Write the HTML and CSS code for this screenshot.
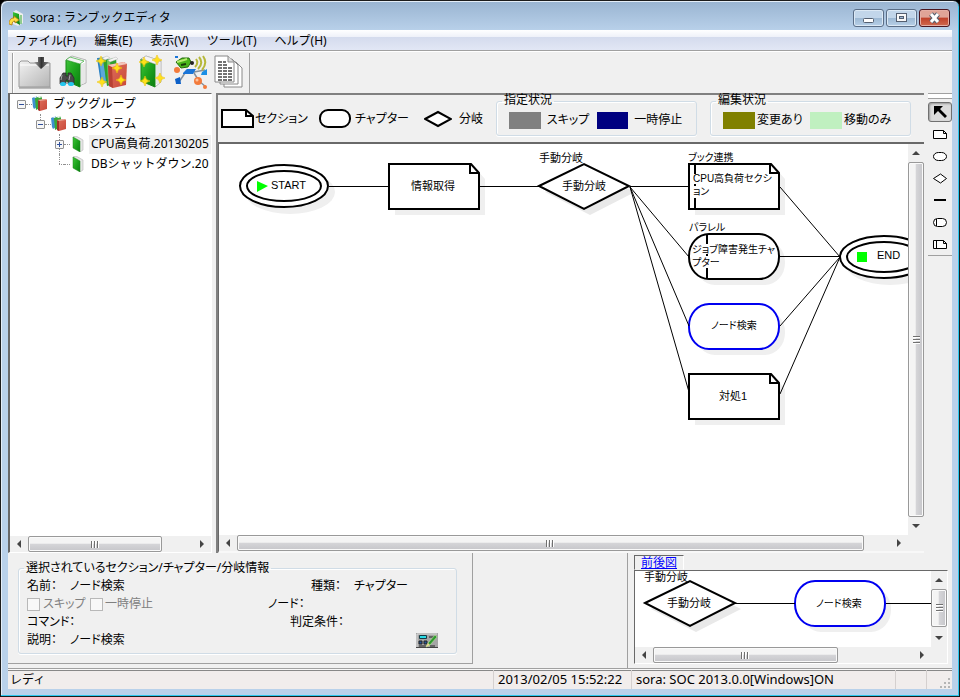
FILE: index.html
```html
<!DOCTYPE html>
<html lang="ja">
<head>
<meta charset="utf-8">
<title>sora : ランブックエディタ</title>
<link rel="stylesheet" href="styles.css">
</head>
<body>
<svg class="defs" aria-hidden="true">
  <defs>
    <linearGradient id="g-green" x1="0" y1="0" x2="1" y2="1"><stop offset="0" stop-color="#3fc43a"/><stop offset=".5" stop-color="#1da31d"/><stop offset="1" stop-color="#0c7d12"/></linearGradient>
    <linearGradient id="g-red" x1="0" y1="0" x2="1" y2="1"><stop offset="0" stop-color="#e0705c"/><stop offset="1" stop-color="#c8483a"/></linearGradient>
    <linearGradient id="g-folder" x1="0" y1="0" x2="1" y2="1"><stop offset="0" stop-color="#f2f2f2"/><stop offset="1" stop-color="#b4b4b4"/></linearGradient>
    <linearGradient id="g-arrow" x1="0" y1="0" x2="1" y2="0"><stop offset="0" stop-color="#aaa"/><stop offset=".5" stop-color="#333"/><stop offset="1" stop-color="#888"/></linearGradient>
    <path id="spark" d="M0-5Q.6-.6 5 0Q.6 .6 0 5Q-.6 .6-5 0Q-.6-.6 0-5Z" fill="#ffe01a" stroke="#f0c400" stroke-width=".6"/>

    <g id="section">
      <path d="M6 51V6H88L96 15V51Z" fill="#efefef"/>
      <path d="M0 0H82L90 9V45H0Z" fill="#fff" stroke="currentColor" stroke-width="2"/>
      <path d="M81 0V9H90" fill="none" stroke="currentColor" stroke-width="2"/>
    </g>
    <g id="chapter">
      <rect x="6" y="6" width="90" height="45" rx="20" ry="22" fill="#efefef"/>
      <rect width="90" height="45" rx="20" ry="22" fill="#fff" stroke="currentColor" stroke-width="2"/>
    </g>
    <g id="branch">
      <path d="M6 28L51 6L96 28L51 51Z" fill="#e9e9e9"/>
      <path d="M0 22L45 0L90 22L45 45Z" fill="#fff" stroke="currentColor" stroke-width="2"/>
    </g>
    <g id="terminal">
      <ellipse cx="51" cy="28" rx="45" ry="22" fill="#efefef"/>
      <ellipse cx="45" cy="22" rx="44" ry="21" fill="#fff" stroke="currentColor" stroke-width="2"/>
      <ellipse cx="45" cy="22" rx="37" ry="15" fill="#fff" stroke="currentColor" stroke-width="2"/>
    </g>
    <g id="books">
      <path d="M0 2L5 0V11L2 13L1 11Z" fill="#3f8fd0"/>
      <path d="M3 2L9 0L10 2V11L4 14Z" fill="#3aa83a"/>
      <path d="M2 1L4 0L5 1L3 2ZM6 1L8 0L10 1L7 2Z" fill="#fff"/>
      <path d="M6 4L14 3L15 4V13L8 15L6 14Z" fill="url(#g-red)"/>
      <path d="M6 4L8 5V15L6 14Z" fill="#a03028"/>
      <path d="M6 4L13 3L15 4L8 5Z" fill="#e8a898"/>
    </g>
    <g id="book">
      <path d="M1 1L4 0L11 4V14L8 16Z" fill="#e6e6e6" stroke="#aaa" stroke-width=".5"/>
      <path d="M1 1L8 5V16L1 12Z" fill="url(#g-green)" stroke="#188a18" stroke-width=".5"/>
    </g>
  </defs>
</svg>

<div class="window">
  <header class="titlebar">
    <svg class="app-icon" width="16" height="16" viewBox="0 0 16 16"><path d="M4 2L7 0L14 4V13L9 16L4 14Z" fill="#eee"/><path d="M4 2L10 4L11 15L4 11Z" fill="url(#g-green)"/><path d="M12 5V14" stroke="#3a3" stroke-width="1"/><path d="M0 14C0 10 2 8 5 8L5 6L10 10L6 13L6 11C4 11 3 12 3 15Z" fill="#ffdf45" stroke="#b87a10" stroke-width=".8"/></svg>
    <h1 class="title">sora : ランブックエディタ</h1>
    <div class="window-buttons">
      <button class="wbtn" type="button" aria-label="最小化"><svg width="29" height="16"><rect x="9.5" y="8.500" width="10" height="4" rx="1" fill="#fff" stroke="#545f70"/></svg></button>
      <button class="wbtn" type="button" aria-label="最大化"><svg width="29" height="16"><rect x="9.5" y="3.500" width="10" height="8" fill="#f8f8f8" stroke="#545f70"/><rect x="12.500" y="6.500" width="4" height="2" fill="#9db8d4" stroke="#545f70"/></svg></button>
      <button class="wbtn wbtn-close" type="button" aria-label="閉じる"><svg width="29" height="16"><path d="M11 4L18 12M18 4L11 12" stroke="#56606e" stroke-width="5"/><path d="M11 4L18 12M18 4L11 12" stroke="#fff" stroke-width="3"/></svg></button>
    </div>
  </header>

  <nav class="menubar">
    <button type="button">ファイル(F)</button>
    <button type="button">編集(E)</button>
    <button type="button">表示(V)</button>
    <button type="button">ツール(T)</button>
    <button type="button">ヘルプ(H)</button>
  </nav>

  <div class="toolbar">
    <div class="tools">
      <button type="button" aria-label="開く"><svg width="34" height="34" viewBox="0 0 34 34"><path d="M1 8L3 6H10L12 8H32V32H1Z" fill="url(#g-folder)" stroke="#999"/><path d="M2 10H31" stroke="#fff"/><path d="M20 2H26V7H31L23 14L16 7H20Z" fill="url(#g-arrow)"/><path d="M1 33H33" stroke="#888"/></svg></button>
      <button type="button" aria-label="ブック検索"><svg width="34" height="34" viewBox="0 0 34 34"><path d="M10 4L15 1L29 5V28L22 31Z" fill="#fff" stroke="#999" stroke-width=".7"/><path d="M25 9V29M27 8V28" stroke="#bbb" stroke-width=".7"/><path d="M9 5L23 9V32L9 26Z" fill="url(#g-green)" stroke="#178817"/><path d="M9 5L13 2L27 6L23 9Z" fill="#f4f4f4" stroke="#3a3" stroke-width=".7"/><path d="M3 23L6 18H9V21H11V18H14L17 23V29H11V25H9V29H3Z" fill="#4a4a4a" stroke="#222" stroke-width=".7"/><path d="M5 20L4 25M13 20L12 25" stroke="#aaa"/><ellipse cx="6" cy="29" rx="3" ry="2" fill="#25c7ee"/><ellipse cx="14" cy="29" rx="3" ry="2" fill="#25c7ee"/></svg></button>
      <button type="button" aria-label="ブックグループ作成"><svg width="34" height="34" viewBox="0 0 34 34"><path d="M1 3L12 2L14 27L5 29Z" fill="#2b82c4"/><path d="M3 4L8 3L10 28L6 28Z" fill="#5da8da"/><path d="M7 5L20 3L22 28L11 31Z" fill="#2ea02e"/><path d="M11 5L14 4L15 28L12 29Z" fill="#72c960"/><path d="M6 3L11 1L14 3L9 5ZM12 5L20 2L22 4L14 7Z" fill="#f5f5f5" stroke="#aaa" stroke-width=".4"/><path d="M12 10L28 7L31 9L30 30L17 33L13 31Z" fill="url(#g-red)"/><path d="M12 10L16 12L17 33L13 31Z" fill="#b84034"/><path d="M12 10L28 7L31 9L16 12Z" fill="#f2c6bc"/><use href="#spark" x="5" y="6"/><use href="#spark" x="21" y="13"/><use href="#spark" x="25" y="25"/><use href="#spark" x="6" y="27"/></svg></button>
      <button type="button" aria-label="ブック作成"><svg width="34" height="34" viewBox="0 0 34 34"><path d="M6 4L11 1L26 6V27L20 32Z" fill="#fff" stroke="#999" stroke-width=".7"/><path d="M22 9V29M24 8V28" stroke="#bbb" stroke-width=".7"/><path d="M6 4L20 9V32L6 26Z" fill="url(#g-green)" stroke="#178817"/><path d="M6 4L11 1L26 6L20 9Z" fill="#f4f4f4" stroke="#aaa" stroke-width=".5"/><use href="#spark" x="9" y="7"/><use href="#spark" x="22" y="5"/><use href="#spark" x="25" y="23"/><use href="#spark" x="10" y="26"/></svg></button>
      <button type="button" aria-label="ノード自動取得"><svg width="34" height="34" viewBox="0 0 34 34"><path d="M5 27L13 15M20 18L25 26M20 17L31 15M25 26L32 32" stroke="#87909a" stroke-width="1.500"/><path d="M9 18L13 14H22L19 19H9Z" fill="#1a75d8"/><path d="M1 24L6 22L7 29L2 29Z" fill="#0c60c8"/><path d="M28 17L33 14V20H27Z" fill="#1a8fe6"/><circle cx="3" cy="15" r="3" fill="#f37b3c"/><circle cx="24" cy="26" r="4" fill="#f37b3c"/><circle cx="23" cy="25" r="1.500" fill="#ffc49c"/><circle cx="31" cy="32" r="2" fill="#f37b3c"/><path d="M2 7L8 3L15 3L17 7L14 12L7 13Z" fill="#48b51a" stroke="#246d0c"/><path d="M3 7L10 5L13 4" stroke="#b6ec70" stroke-width="2" fill="none"/><path d="M7 10L12 9" stroke="#183d08" stroke-width="2"/><circle cx="18" cy="8" r="2" fill="#222"/><path d="M22 4Q25 8 21 12M25 2Q30 8 24 14M29 1Q34 8 28 15" fill="none" stroke="#b6b83a" stroke-width="2"/><path d="M1 2H4" stroke="#1a75d8" stroke-width="2"/></svg></button>
      <button type="button" aria-label="レポート"><svg width="34" height="34" viewBox="0 0 34 34"><path d="M11 7H23L29 13V32H11Z" fill="#fff" stroke="#888"/><path d="M7 4H19L25 10V29H7Z" fill="#fff" stroke="#888"/><path d="M2 1H15L21 7V27H2Z" fill="#fff" stroke="#888"/><path d="M15 1V7H21" fill="#ddd" stroke="#888"/><path d="M5 7H13M5 10H14M5 13H19M5 16H19M5 19H19M5 22H19M5 25H19" stroke="#444" stroke-width="1.500" stroke-dasharray="4 1"/></svg></button>
    </div>
  </div>

  <main class="workspace">
    <section class="tree-panel">
      <ul class="tree">
        <li>
          <div class="tree-row"><span class="box minus"></span><span class="dots"></span><svg width="16" height="16"><use href="#books"/></svg><span class="tree-text">ブックグループ</span></div>
          <ul>
            <li class="last">
              <div class="tree-row"><span class="box minus"></span><span class="dots"></span><svg width="16" height="16"><use href="#books"/></svg><span class="tree-text">DBシステム</span></div>
              <ul>
                <li>
                  <div class="tree-row"><span class="box plus"></span><span class="dots"></span><svg class="leaf" width="16" height="16"><use href="#book" x="2"/></svg><span class="tree-text selected">CPU高負荷.20130205</span></div>
                </li>
                <li class="last">
                  <div class="tree-row"><span class="elbow"></span><span class="dots"></span><svg class="leaf" width="16" height="16"><use href="#book" x="2"/></svg><span class="tree-text">DBシャットダウン.20</span></div>
                </li>
              </ul>
            </li>
          </ul>
        </li>
      </ul>
      <div class="hscroll">
        <button type="button" class="arrow left" aria-label="左へ"></button>
        <div class="track"><div class="thumb tree-thumb"></div></div>
        <button type="button" class="arrow right" aria-label="右へ"></button>
      </div>
    </section>

    <section class="editor">
      <div class="legend-bar">
        <span class="legend-item"><svg width="33" height="20"><path d="M1 1H25L32 7V18H1Z" fill="#fff" stroke="#000" stroke-width="2"/><path d="M25 1V7H32" fill="none" stroke="#000" stroke-width="2"/></svg>セクション</span>
        <span class="legend-item wide-gap"><svg width="32" height="20"><rect x="1" y="1" width="30" height="17" rx="8" fill="#fff" stroke="#000" stroke-width="2"/></svg>チャプター</span>
        <span class="legend-item branch-item"><svg width="28" height="20"><path d="M1 10L14 3L27 10L14 17Z" fill="#fff" stroke="#000" stroke-width="2"/></svg>分岐</span>
        <fieldset class="status-group">
          <legend>指定状況</legend>
          <span class="swatch gray"></span><span class="swatch-label">スキップ</span>
          <span class="swatch navy"></span><span class="swatch-label">一時停止</span>
        </fieldset>
        <fieldset class="status-group">
          <legend>編集状況</legend>
          <span class="swatch olive"></span><span class="swatch-label tight">変更あり</span>
          <span class="swatch mint"></span><span class="swatch-label tight">移動のみ</span>
        </fieldset>
      </div>
      <div class="canvas-frame">
        <svg class="canvas" role="img" aria-label="ランブックフロー図">
          <use href="#terminal" x="20" y="20"/>
          <use href="#section" x="170" y="20"/>
          <use href="#branch" x="320" y="20"/>
          <use href="#section" x="470" y="20"/>
          <use href="#chapter" x="470" y="90"/>
          <use href="#chapter" class="active" x="470" y="160"/>
          <use href="#section" x="470" y="230"/>
          <use href="#terminal" x="620" y="91"/>
          <g class="links">
            <path class="straight" d="M110 42.500H170M260 42.500H320M411 42.500H470M560 112.500H621"/>
            <path d="M411 43L470 113M411 43L470 182M411 43L470 248M561 43L621 113M561 182L621 113M561 250L621 113"/>
          </g>
          <path class="bar" d="M476 20V30M476 40V42M476 54V65M488 90V100M488 110V112M488 124V135"/>
          <path d="M38 37L49 42L38 48Z" fill="#0f0"/>
          <rect x="638" y="108" width="10" height="10" fill="#0f0"/>
          <text x="52" y="45">START</text>
          <text x="192" y="46">情報取得</text>
          <text x="320" y="18">手動分岐</text>
          <text x="343" y="46">手動分岐</text>
          <text class="kana" x="469" y="17">ブック連携</text>
          <text class="kana" x="474" y="38">CPU高負荷セクシ</text>
          <text class="kana" x="474" y="51">ョン</text>
          <text class="kana" x="470" y="87">パラレル</text>
          <text class="kana" x="473" y="109">ジョブ障害発生チャ</text>
          <text class="kana" x="473" y="122">プター</text>
          <text class="kana" x="492" y="185">ノード検索</text>
          <text x="500" y="256">対処1</text>
          <text x="658" y="115">END</text>
        </svg>
        <div class="vscroll">
          <button type="button" class="arrow up" aria-label="上へ"></button>
          <div class="track"><div class="thumb canvas-vthumb"></div></div>
          <button type="button" class="arrow down" aria-label="下へ"></button>
        </div>
        <div class="hscroll">
          <button type="button" class="arrow left" aria-label="左へ"></button>
          <div class="track"><div class="thumb canvas-hthumb"></div></div>
          <button type="button" class="arrow right" aria-label="右へ"></button>
        </div>
      </div>
    </section>

    <aside class="palette">
      <div class="palette-head"></div>
      <button type="button" class="pressed" aria-label="選択"><svg width="16" height="16"><path d="M2 2H11L8 5L15 12L13 14L6 7L2 11Z"/></svg></button>
      <button type="button" aria-label="セクション"><svg width="16" height="16"><path class="o" d="M1.500 4.500H11.500L14.500 7.500V12.500H1.500ZM11.500 4.500V7.500H14.500"/></svg></button>
      <button type="button" aria-label="チャプター"><svg width="16" height="16"><rect class="o" x="1.500" y="4.500" width="13" height="8" rx="5" ry="4"/></svg></button>
      <button type="button" aria-label="分岐"><svg width="16" height="16"><path class="o" d="M1.500 8.500L8.500 4L14.500 8.500L8.500 13Z"/></svg></button>
      <button type="button" aria-label="線"><svg width="16" height="16"><rect x="2" y="7" width="12" height="2"/></svg></button>
      <button type="button" aria-label="パラレル"><svg width="16" height="16"><rect class="o" x="1.500" y="4.500" width="13" height="8" rx="4"/><path class="o" d="M4.500 5V12"/></svg></button>
      <button type="button" aria-label="ブック連携"><svg width="16" height="16"><path class="o" d="M1.500 4.500H11.500L14.500 7.500V12.500H1.500ZM11.500 4.500V7.500H14.500M4.500 4.500V12.500"/></svg></button>
      <div class="palette-end"></div>
    </aside>
  </main>

  <section class="lower">
    <div class="info-panel">
      <fieldset class="info">
        <legend>選択されているセクション/チャプター/分岐情報</legend>
        <div class="info-row">
          <span class="key">名前：</span><span class="val">ノード検索</span>
          <span class="key key-kind">種類：</span><span>チャプター</span>
        </div>
        <div class="info-row">
          <label class="check"><input type="checkbox" disabled>スキップ</label>
          <label class="check"><input type="checkbox" disabled>一時停止</label>
          <span class="key-node">ノード：</span>
        </div>
        <div class="info-row">
          <span>コマンド：</span>
          <span class="key-cond">判定条件：</span>
        </div>
        <div class="info-row">
          <span class="key">説明：</span><span class="val">ノード検索</span>
          <button type="button" class="edit" aria-label="編集"><svg width="22" height="15"><rect width="22" height="15" fill="#a5a5a5"/><path d="M1 14V1H21" fill="none" stroke="#ddd"/><path d="M0 14.500H22" stroke="#444"/><rect x="3" y="2" width="8" height="4" rx="1" fill="#153b44"/><path d="M4 4H10" stroke="#29dbe6" stroke-width="2"/><path d="M13 4H20M3 13H10M14 13H19" stroke="#222"/><path d="M3 8H6V11H3ZM8 8H11V11H8Z" fill="#26569c" stroke="#222"/><path d="M10 14L12 10L19 2L21 4L14 12Z" fill="#2f9a2f" stroke="#bfe6a0" stroke-width=".6"/><path d="M10 14L12 10L14 12Z" fill="#f0d590"/></svg></button>
        </div>
      </fieldset>
    </div>
    <div class="preview-panel">
      <a class="tab" href="#preview">前後図</a>
      <div class="preview-frame" id="preview">
        <svg class="canvas" role="img" aria-label="前後図">
          <use href="#branch" x="10" y="10"/>
          <use href="#chapter" class="active" x="160" y="10"/>
          <g class="links"><path class="straight" d="M99 32.500H160M251 32.500H400"/></g>
          <text x="9" y="10">手動分岐</text>
          <text x="32" y="36">手動分岐</text>
          <text class="kana" x="181" y="36">ノード検索</text>
        </svg>
        <div class="vscroll">
          <button type="button" class="arrow up" aria-label="上へ"></button>
          <div class="track"><div class="thumb preview-vthumb"></div></div>
          <button type="button" class="arrow down" aria-label="下へ"></button>
        </div>
        <div class="hscroll">
          <button type="button" class="arrow left" aria-label="左へ"></button>
          <div class="track"><div class="thumb preview-hthumb"></div></div>
          <button type="button" class="arrow right" aria-label="右へ"></button>
        </div>
      </div>
    </div>
  </section>

  <footer class="statusbar">
    <span class="ready">レディ</span>
    <span class="cell clock">2013/02/05 15:52:22</span>
    <span class="cell host">sora: SOC 2013.0.0[Windows]ON</span>
    <span class="cell blank"></span>
    <span class="cell grip"><svg width="12" height="12" fill="#b5b5b5"><path d="M9 1h2v2h-2zM5 5h2v2h-2zM9 5h2v2h-2zM1 9h2v2h-2zM5 9h2v2h-2zM9 9h2v2h-2z"/></svg></span>
  </footer>
</div>
</body>
</html>
```

FILE: styles.css
```css
* { box-sizing: border-box; }

body {
  margin: 0;
  background: #000;
  color: #000;
  font: 12px/16px "Noto Sans", "Noto Sans CJK JP", sans-serif;
}

button, input { font: inherit; color: inherit; }
button { padding: 0; border: 0; background: none; }
ul { list-style: none; margin: 0; padding: 0; }
svg { display: block; flex: none; }
fieldset { margin: 0; padding: 0; min-width: 0; border: 1px solid #d0dce6; border-radius: 3px; box-shadow: inset 1px 1px #fff, 0 1px #fff; }
legend { padding: 0 2px; }
.defs { position: absolute; width: 0; height: 0; }

.window {
  display: flex;
  flex-direction: column;
  height: 100vh;
  min-height: 600px;
  padding: 0 7px 7px;
  border: 1px solid #1c1c1c;
  border-radius: 7px 7px 0 0;
  background: linear-gradient(#99b4d1, #b9d1ea 30px);
  box-shadow: inset -1px -1px #2cc8ee, inset 1px 1px #e4eef8;
  overflow: hidden;
}

/* title and menus */
.titlebar { display: flex; align-items: center; height: 29px; padding: 5px 2px 0 1px; gap: 5px; }
.title { flex: 1; margin: 0; font-size: 12px; font-weight: 400; }
.window-buttons { display: flex; gap: 2px; }
.wbtn {
  width: 31px;
  height: 18px;
  border: 1px solid #5a6d86;
  border-radius: 3px;
  background: linear-gradient(#c2d6ea 50%, #9cb8d3 50%, #b8d0e8);
  box-shadow: inset 0 0 0 1px #dce9f5;
}
.wbtn-close { border-color: #4b1620; background: linear-gradient(#e0a497 45%, #c0412a 50%, #cf6a50); box-shadow: inset 0 0 0 1px #e5aea4; }

.menubar {
  display: flex;
  gap: 18px;
  height: 21px;
  padding: 1px 7px 0;
  border-bottom: 1px solid #a0a0a0;
  background: linear-gradient(#fff, #eef1f9 7px, #d4dbed 7px, #e2e7f5);
}

.toolbar { display: flex; height: 42px; padding-top: 2px; background: #f0f0f0; box-shadow: inset 0 1px #fff; }
.tools { display: flex; align-items: flex-start; gap: 5px; margin-left: 4px; padding: 2px 2px 0 5px; border: solid #a0a0a0; border-width: 0 1px; box-shadow: inset 1px 0 #fff; }

/* work area */
.workspace {
  display: grid;
  grid-template-columns: 204px minmax(0, 1fr) 24px;
  flex: 1;
  min-height: 0;
  background: #f0f0f0;
}
.tree-panel {
  display: flex;
  flex-direction: column;
  border: solid;
  border-width: 1px 1px 1px 2px;
  border-color: #696969 #fff #fff #696969;
  background: #fff;
  overflow: hidden;
}
.tree { flex: 1; padding-left: 7px; overflow: hidden; }
.tree li { position: relative; }
.tree ul { padding-left: 19px; }
.tree ul li::before { content: ""; position: absolute; left: 4px; top: 0; height: 100%; border-left: 1px dotted #909090; }
.tree li.last::before { height: 10px; }
.tree-row { position: relative; display: flex; align-items: center; height: 20px; white-space: nowrap; }
.tree-row > * { flex: none; }
.tree-text { height: 19px; padding: 1px 2px 0; margin-left: 3px; }
.tree-text.selected { background: #f0f0f0; }
.box { width: 9px; height: 9px; border: 1px solid #919191; border-radius: 1px; background: linear-gradient(#2f4f9c, #2f4f9c) center / 5px 1px no-repeat, #f6f6f6; }
.box.plus { background: linear-gradient(#2f4f9c, #2f4f9c) center / 5px 1px no-repeat, linear-gradient(#2f4f9c, #2f4f9c) center / 1px 5px no-repeat, #f6f6f6; }
.dots { width: 6px; border-top: 1px dotted #909090; }
.elbow { width: 5px; margin-left: 4px; border-top: 1px dotted #909090; }

.editor { display: flex; flex-direction: column; min-width: 0; margin: 0 4px; border: solid; border-width: 2px 0 0 2px; border-color: #808080; }
.legend-bar {
  display: grid;
  grid-template-columns: 98px 105px 72px 201px 201px;
  height: 47px;
  padding-left: 3px;
}
.legend-item { display: flex; align-items: center; gap: 1px; font-feature-settings: "palt"; white-space: nowrap; }
.wide-gap { gap: 4px; }
.branch-item { gap: 7px; }
.status-group { display: flex; align-items: flex-start; height: 41px; padding: 0 12px; font-feature-settings: "palt"; }
.status-group + .status-group { margin-left: 13px; margin-right: -13px; }
.status-group legend { height: 12px; margin-left: -7px; line-height: 10px; }
.swatch { width: 32px; height: 17px; margin-top: 5px; }
.swatch-label { width: 56px; height: 17px; margin-top: 5px; padding-left: 6px; white-space: nowrap; }
.swatch-label.tight { width: 55px; padding-left: 2px; }
.gray { background: #808080; }
.navy { background: #000080; }
.olive { background: #808000; }
.mint { background: #c0f0c0; }

.canvas-frame {
  display: grid;
  grid-template-columns: minmax(0, 1fr) 16px;
  grid-template-rows: minmax(0, 1fr) 16px;
  flex: 1;
  min-height: 0;
  border: solid #696969;
  border-width: 2px 0 0 1px;
  border-bottom: 2px solid #f8f8f8;
}
.canvas { width: 100%; height: 100%; background: #fff; color: #000; font: 11px "Liberation Sans", "Noto Sans CJK JP", sans-serif; font-feature-settings: "palt"; overflow: hidden; }
.kana { font-size: 10px; }
.links { stroke: #000; stroke-width: 1; fill: none; }
.straight { shape-rendering: crispEdges; }
.bar { stroke: #000; stroke-width: 2; }
.active { color: #0000f0; }

/* scroll bars */
.hscroll, .vscroll { display: flex; background: #f0f0f0; }
.hscroll { height: 16px; }
.vscroll { flex-direction: column; width: 16px; }
.track { display: flex; flex: 1; min-width: 0; min-height: 0; }
.vscroll .track { flex-direction: column; }
.thumb { display: flex; align-items: center; justify-content: center; border: 1px solid #999; border-radius: 2px; background: linear-gradient(#f4f4f4 45%, #d5d5d8 50%, #c6c6ca); box-shadow: inset 0 0 0 1px #fafafa; }
.vscroll .thumb { background: linear-gradient(90deg, #f4f4f4 45%, #d5d5d8 50%, #c6c6ca); }
.thumb::before { content: ""; width: 8px; height: 7px; background: repeating-linear-gradient(90deg, #707070 0 1px, #fff 1px 2px, transparent 2px 3px); }
.vscroll .thumb::before { width: 7px; height: 8px; background: repeating-linear-gradient(#707070 0 1px, #fff 1px 2px, transparent 2px 3px); }
.tree-thumb { width: 81%; }
.canvas-hthumb { width: 96%; }
.canvas-vthumb { height: 100%; }
.preview-hthumb { width: 71%; }
.preview-vthumb { height: 95%; }
.arrow { display: flex; align-items: center; justify-content: center; flex: none; width: 18px; height: 16px; }
.vscroll .arrow { width: 16px; height: 18px; }
.arrow::before { content: ""; border: 4px solid transparent; }
.arrow.left::before { border-right-color: #444; border-left-width: 0; }
.arrow.right::before { border-left-color: #444; border-right-width: 0; }
.arrow.up::before { border-bottom-color: #444; border-top-width: 0; }
.arrow.down::before { border-top-color: #444; border-bottom-width: 0; }

.palette { border-top: 1px solid #a0a0a0; }
.palette-head { height: 5px; margin-bottom: 3px; border-bottom: 1px solid #a0a0a0; background: #fff; }
.palette button { display: flex; align-items: center; justify-content: center; width: 100%; height: 22px; }
.palette .pressed { height: 20px; margin-bottom: 1px; border: 1px solid #707070; border-radius: 3px; background: #dcdcdc; box-shadow: inset 1px 1px 2px #999; }
.palette .o { fill: #fff; stroke: #000; }
.palette-end { border-top: 1px solid #a0a0a0; }

/* lower panes */
.lower { display: flex; justify-content: space-between; height: 116px; background: #f0f0f0; border-bottom: 1px solid #a0a0a0; }
.info-panel { flex: 0 1 465px; height: 111px; padding: 7px 15px 0 10px; border: solid #a0a0a0; border-width: 0 1px 1px 0; }
.info { height: 94px; padding: 1px 8px 0; font-feature-settings: "palt"; }
.info legend { height: 16px; margin-left: -3px; }
.info-row { display: flex; align-items: center; height: 18px; white-space: nowrap; }
.key { width: 43px; }
.val { width: 120px; }
.key-kind { margin-left: 121px; }
.check { display: flex; align-items: center; gap: 3px; width: 63px; color: #808080; }
.check input { appearance: none; width: 13px; height: 13px; margin: 0; border: 1px solid #b8b8b8; background: #f8f8f8; }
.check + .check { width: 178px; gap: 2px; }
.key-cond { margin-left: auto; margin-right: 104px; }
.edit { margin-left: auto; margin-right: 10px; }

.preview-panel { display: flex; flex-direction: column; align-items: flex-start; flex: 0 1 325px; padding: 2px 4px 4px 6px; border-left: 1px solid #a0a0a0; }
.tab { height: 15px; padding: 0 6px; border: solid; border-width: 1px; border-color: #696969 #fff transparent #696969; color: #00f; line-height: 13px; }
.preview-frame {
  display: grid;
  grid-template-columns: minmax(0, 1fr) 16px;
  grid-template-rows: minmax(0, 1fr) 16px;
  align-self: stretch;
  flex: 1;
  min-height: 0;
  border: solid;
  border-width: 1px;
  border-color: #696969 #fff #fff #696969;
}

.statusbar { display: flex; align-items: center; height: 20px; padding-left: 2px; border-top: 1px solid #f8f8f8; background: #f1edec; box-shadow: inset 0 1px #888; font-size: 13px; }
.ready { flex: 1; font-size: 12px; }
.cell { align-self: stretch; padding: 1px 0 0 4px; border-left: 1px solid #d5d0cf; white-space: nowrap; }
.clock { width: 138px; }
.host { width: 264px; }
.blank { width: 31px; }
.grip { display: flex; align-items: flex-end; width: 26px; padding-left: 12px; }
```
